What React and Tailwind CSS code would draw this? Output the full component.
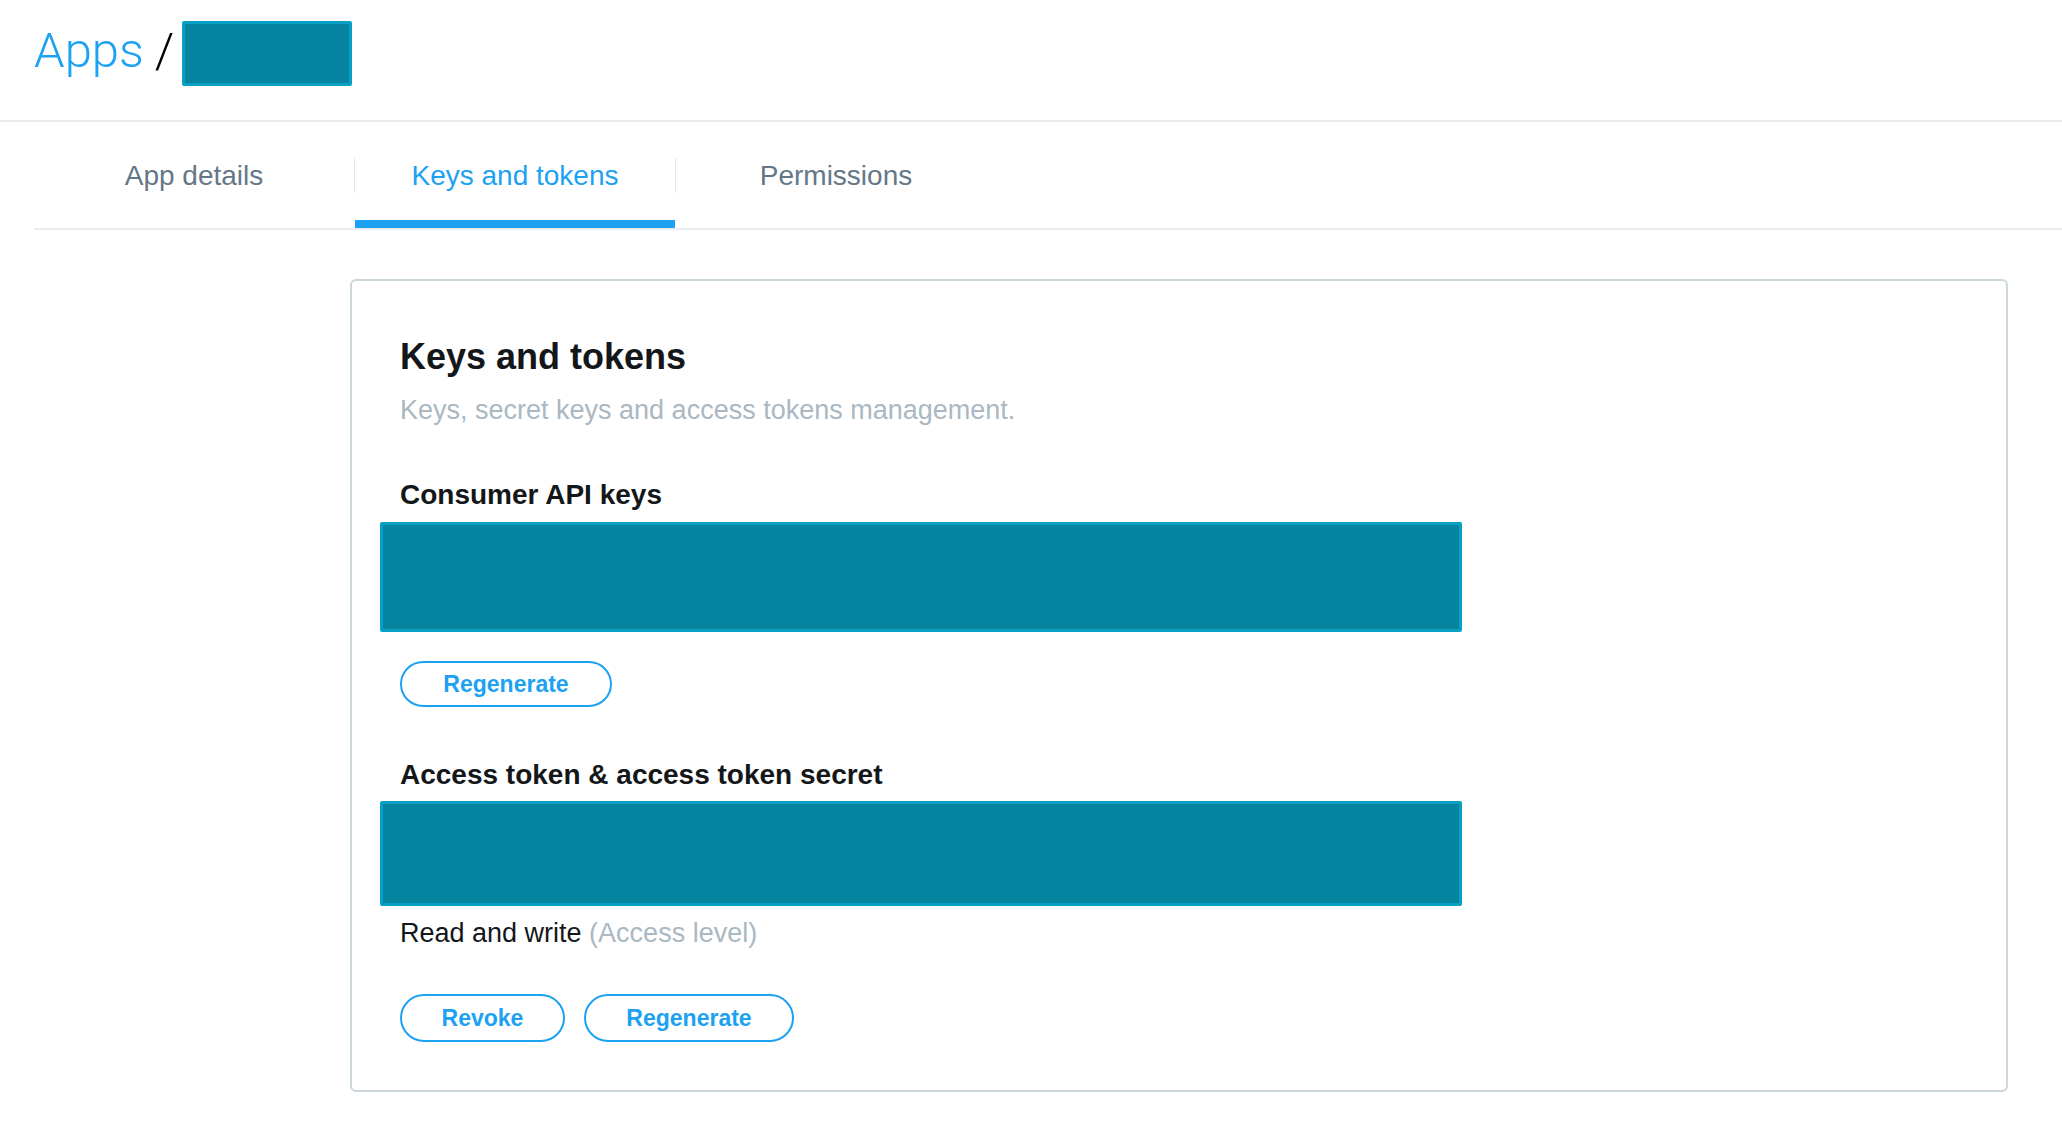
export default function App() {
  const tabs = ["App details", "Keys and tokens", "Permissions"];
  const active = "Keys and tokens";

  return (
    <div className="min-h-screen bg-white font-['Liberation_Sans',Arial,sans-serif] text-[#14171a]">
      {/* header */}
      <div className="h-[122px] border-b-2 border-[#e6ecf0] pl-[34px] pt-[21px] flex items-start">
        <span className="mt-[5px] text-[49px] leading-none font-light text-[#1da1f2] font-['Roboto','Liberation_Sans',sans-serif]">
          Apps
        </span>
        <span className="mt-[5px] ml-[11px] text-[49px] leading-none font-light text-black font-['Roboto','Liberation_Sans',sans-serif]">
          /
        </span>
        <div className="ml-[8px] w-[170px] h-[65px] bg-[#05839f] border-[3px] border-[#09a0c5] rounded-[2px]" />
      </div>

      {/* tabs */}
      <div className="ml-[34px] flex items-center border-b-2 border-[#e6ecf0]">
        {tabs.map((t, i) => (
          <div key={t} className="flex items-center">
            {i > 0 && <div className="w-px h-[35px] bg-[#e1e8ed]" />}
            <div
              className={
                "w-[320px] h-[106px] pt-[9px] flex items-center justify-center text-[28px] leading-none border-b-8 " +
                (t === active
                  ? "border-[#1da1f2] text-[#1da1f2]"
                  : "border-transparent text-[#657786]")
              }
            >
              {t}
            </div>
          </div>
        ))}
      </div>

      {/* card */}
      <div className="mt-[49px] ml-[350px] w-[1658px] border-2 border-[#ccd6dd] rounded-[6px] px-[48px] pt-[58px] pb-[48px]">
        <h1 className="text-[36px] leading-none font-bold">Keys and tokens</h1>
        <p className="mt-[22px] text-[27px] leading-none text-[#aab8c2]">
          Keys, secret keys and access tokens management.
        </p>

        <h2 className="mt-[57px] text-[28px] leading-none font-bold">Consumer API keys</h2>
        <div className="mt-[13px] -ml-[20px] w-[1082px] h-[110px] bg-[#05839f] border-[3px] border-[#09a0c5] rounded-[2px]" />
        <button className="mt-[29px] w-[212px] h-[46px] rounded-full border-2 border-[#1da1f2] text-[#1da1f2] text-[23px] leading-none font-bold">
          Regenerate
        </button>

        <h2 className="mt-[54px] text-[28px] leading-none font-bold">
          Access token &amp; access token secret
        </h2>
        <div className="mt-[12px] -ml-[20px] w-[1082px] h-[105px] bg-[#05839f] border-[3px] border-[#09a0c5] rounded-[2px]" />
        <p className="mt-[14px] text-[27px] leading-none">
          Read and write <span className="text-[#aab8c2]">(Access level)</span>
        </p>

        <div className="mt-[47px] flex gap-[19px]">
          <button className="w-[165px] h-[48px] rounded-full border-2 border-[#1da1f2] text-[#1da1f2] text-[23px] leading-none font-bold">
            Revoke
          </button>
          <button className="w-[210px] h-[48px] rounded-full border-2 border-[#1da1f2] text-[#1da1f2] text-[23px] leading-none font-bold">
            Regenerate
          </button>
        </div>
      </div>
    </div>
  );
}
